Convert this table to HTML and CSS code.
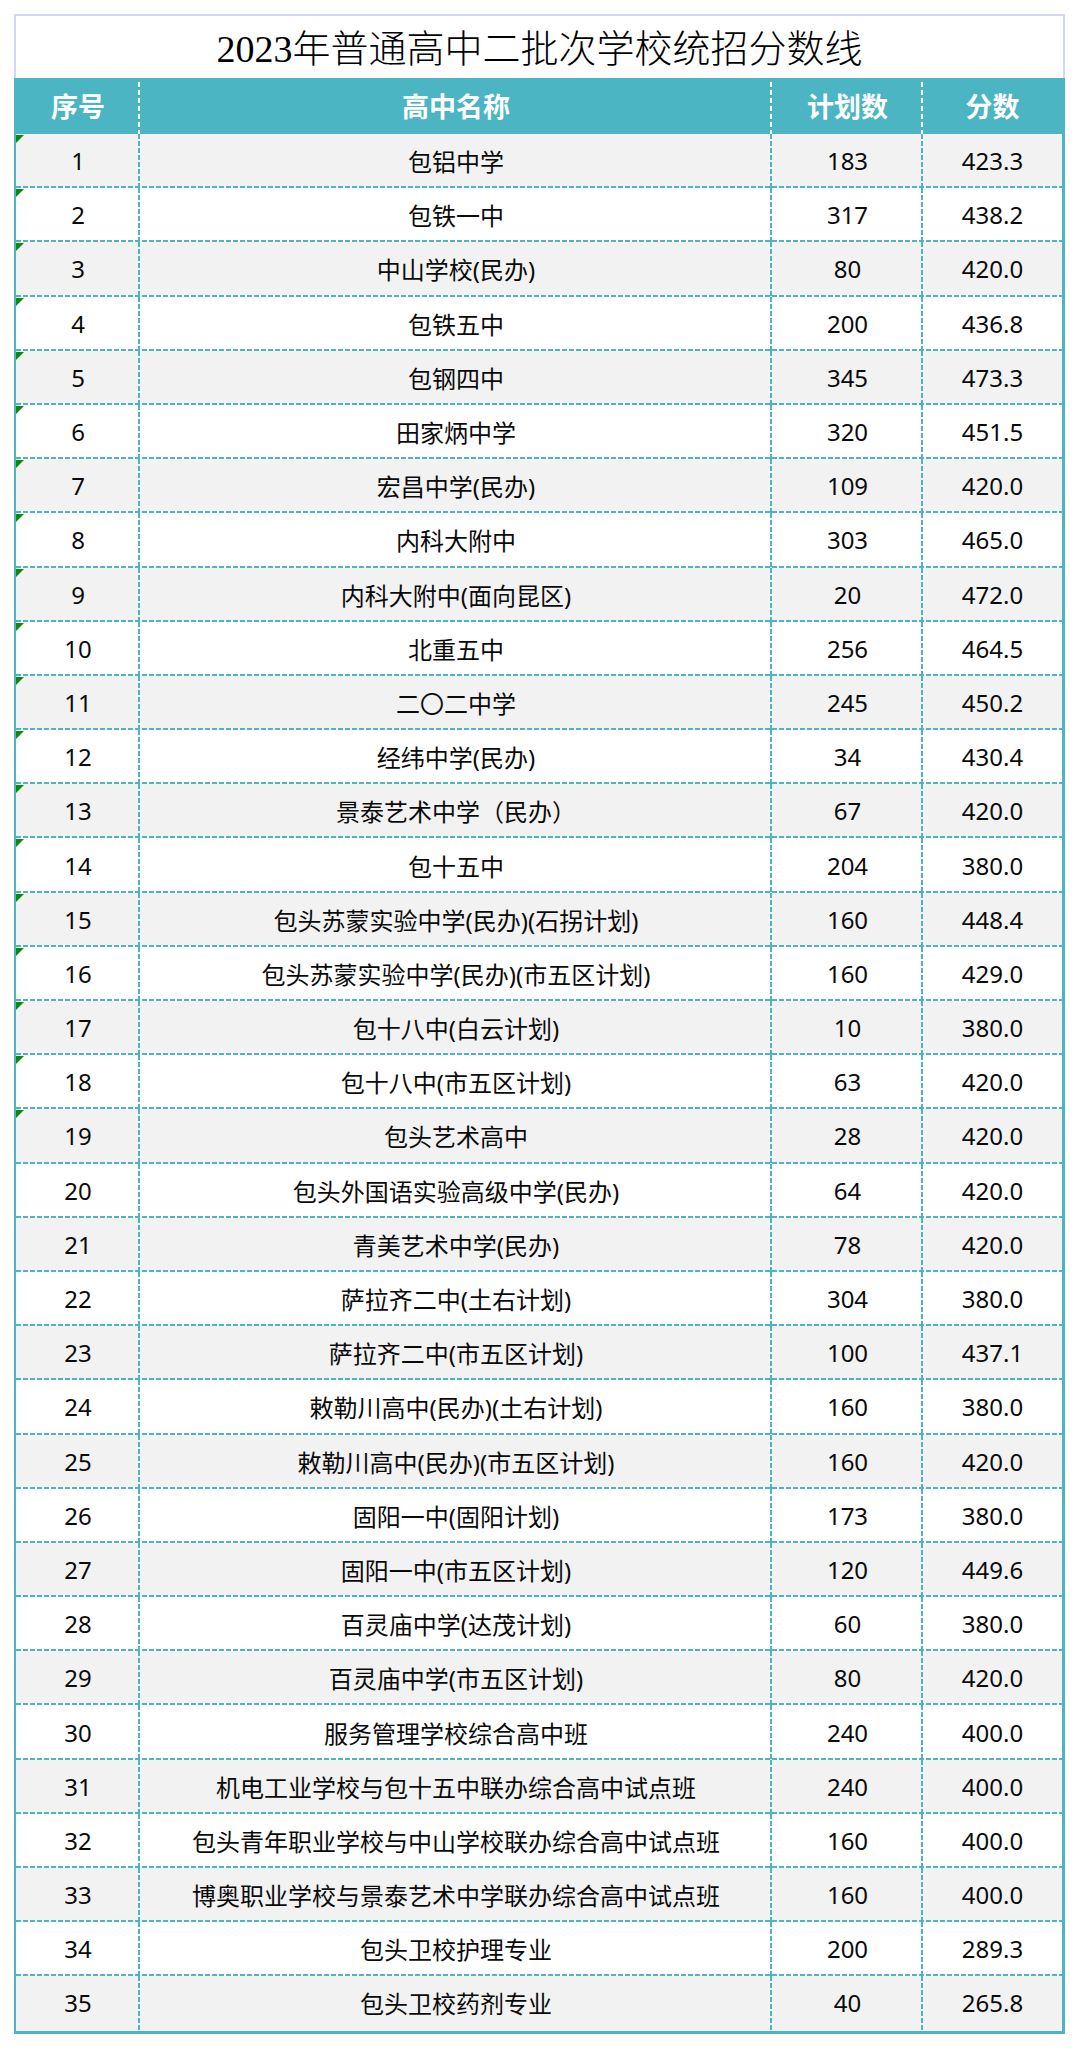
FILE: index.html
```html
<!DOCTYPE html>
<html lang="zh-CN">
<head>
<meta charset="utf-8">
<title>2023年普通高中二批次学校统招分数线</title>
<link rel="stylesheet" href="styles.css">
</head>
<body>
<div class="sheet">
  <div class="title">2023年普通高中二批次学校统招分数线</div>
  <div class="grid">
    <div class="row head"><div class="cell">序号</div><div class="cell">高中名称</div><div class="cell">计划数</div><div class="cell">分数</div></div>
    <div class="row odd mark"><div class="cell">1</div><div class="cell">包铝中学</div><div class="cell">183</div><div class="cell">423.3</div></div>
    <div class="row mark"><div class="cell">2</div><div class="cell">包铁一中</div><div class="cell">317</div><div class="cell">438.2</div></div>
    <div class="row odd mark"><div class="cell">3</div><div class="cell">中山学校(民办)</div><div class="cell">80</div><div class="cell">420.0</div></div>
    <div class="row mark"><div class="cell">4</div><div class="cell">包铁五中</div><div class="cell">200</div><div class="cell">436.8</div></div>
    <div class="row odd mark"><div class="cell">5</div><div class="cell">包钢四中</div><div class="cell">345</div><div class="cell">473.3</div></div>
    <div class="row mark"><div class="cell">6</div><div class="cell">田家炳中学</div><div class="cell">320</div><div class="cell">451.5</div></div>
    <div class="row odd mark"><div class="cell">7</div><div class="cell">宏昌中学(民办)</div><div class="cell">109</div><div class="cell">420.0</div></div>
    <div class="row mark"><div class="cell">8</div><div class="cell">内科大附中</div><div class="cell">303</div><div class="cell">465.0</div></div>
    <div class="row odd mark"><div class="cell">9</div><div class="cell">内科大附中(面向昆区)</div><div class="cell">20</div><div class="cell">472.0</div></div>
    <div class="row mark"><div class="cell">10</div><div class="cell">北重五中</div><div class="cell">256</div><div class="cell">464.5</div></div>
    <div class="row odd mark"><div class="cell">11</div><div class="cell">二〇二中学</div><div class="cell">245</div><div class="cell">450.2</div></div>
    <div class="row mark"><div class="cell">12</div><div class="cell">经纬中学(民办)</div><div class="cell">34</div><div class="cell">430.4</div></div>
    <div class="row odd mark"><div class="cell">13</div><div class="cell">景泰艺术中学（民办）</div><div class="cell">67</div><div class="cell">420.0</div></div>
    <div class="row mark"><div class="cell">14</div><div class="cell">包十五中</div><div class="cell">204</div><div class="cell">380.0</div></div>
    <div class="row odd mark"><div class="cell">15</div><div class="cell">包头苏蒙实验中学(民办)(石拐计划)</div><div class="cell">160</div><div class="cell">448.4</div></div>
    <div class="row mark"><div class="cell">16</div><div class="cell">包头苏蒙实验中学(民办)(市五区计划)</div><div class="cell">160</div><div class="cell">429.0</div></div>
    <div class="row odd mark"><div class="cell">17</div><div class="cell">包十八中(白云计划)</div><div class="cell">10</div><div class="cell">380.0</div></div>
    <div class="row mark"><div class="cell">18</div><div class="cell">包十八中(市五区计划)</div><div class="cell">63</div><div class="cell">420.0</div></div>
    <div class="row odd mark"><div class="cell">19</div><div class="cell">包头艺术高中</div><div class="cell">28</div><div class="cell">420.0</div></div>
    <div class="row"><div class="cell">20</div><div class="cell">包头外国语实验高级中学(民办)</div><div class="cell">64</div><div class="cell">420.0</div></div>
    <div class="row odd"><div class="cell">21</div><div class="cell">青美艺术中学(民办)</div><div class="cell">78</div><div class="cell">420.0</div></div>
    <div class="row"><div class="cell">22</div><div class="cell">萨拉齐二中(土右计划)</div><div class="cell">304</div><div class="cell">380.0</div></div>
    <div class="row odd"><div class="cell">23</div><div class="cell">萨拉齐二中(市五区计划)</div><div class="cell">100</div><div class="cell">437.1</div></div>
    <div class="row"><div class="cell">24</div><div class="cell">敕勒川高中(民办)(土右计划)</div><div class="cell">160</div><div class="cell">380.0</div></div>
    <div class="row odd"><div class="cell">25</div><div class="cell">敕勒川高中(民办)(市五区计划)</div><div class="cell">160</div><div class="cell">420.0</div></div>
    <div class="row"><div class="cell">26</div><div class="cell">固阳一中(固阳计划)</div><div class="cell">173</div><div class="cell">380.0</div></div>
    <div class="row odd"><div class="cell">27</div><div class="cell">固阳一中(市五区计划)</div><div class="cell">120</div><div class="cell">449.6</div></div>
    <div class="row"><div class="cell">28</div><div class="cell">百灵庙中学(达茂计划)</div><div class="cell">60</div><div class="cell">380.0</div></div>
    <div class="row odd"><div class="cell">29</div><div class="cell">百灵庙中学(市五区计划)</div><div class="cell">80</div><div class="cell">420.0</div></div>
    <div class="row"><div class="cell">30</div><div class="cell">服务管理学校综合高中班</div><div class="cell">240</div><div class="cell">400.0</div></div>
    <div class="row odd"><div class="cell">31</div><div class="cell">机电工业学校与包十五中联办综合高中试点班</div><div class="cell">240</div><div class="cell">400.0</div></div>
    <div class="row"><div class="cell">32</div><div class="cell">包头青年职业学校与中山学校联办综合高中试点班</div><div class="cell">160</div><div class="cell">400.0</div></div>
    <div class="row odd"><div class="cell">33</div><div class="cell">博奥职业学校与景泰艺术中学联办综合高中试点班</div><div class="cell">160</div><div class="cell">400.0</div></div>
    <div class="row"><div class="cell">34</div><div class="cell">包头卫校护理专业</div><div class="cell">200</div><div class="cell">289.3</div></div>
    <div class="row odd last"><div class="cell">35</div><div class="cell">包头卫校药剂专业</div><div class="cell">40</div><div class="cell">265.8</div></div>
  </div>
</div>
</body>
</html>
```

FILE: styles.css
```css
html, body {
  margin: 0;
  padding: 0;
  background: #ffffff;
}

.sheet {
  margin: 14px 0 0 14px;
  width: 1051px;
}

.title {
  box-sizing: border-box;
  height: 64px;
  border: 2px solid #d3d9ea;
  border-bottom: none;
  padding-top: 4px;
  line-height: 58px;
  text-align: center;
  font-family: "Liberation Serif", "Noto Sans CJK SC", serif;
  font-size: 38px;
  font-weight: 300;
  color: #000;
  white-space: nowrap;
}

.grid {
  border-left: 2px solid #4bb5c3;
  border-right: 3px solid #4bb5c3;
  border-bottom: 3px solid #4bb5c3;
  font-family: "Noto Sans", "Noto Sans CJK SC", sans-serif;
  font-size: 24px;
  color: #0a0a0a;
}

.row {
  display: grid;
  grid-template-columns: 124px 632px 151px 139px;
  height: 54.2px;
  background-color: #ffffff;
  background-image: repeating-linear-gradient(to right, #4bb5c3 0 5px, transparent 5px 7px);
  background-size: 100% 2px;
  background-position: left bottom;
  background-repeat: no-repeat;
}

.row.odd {
  background-color: #f2f2f2;
}

.row.last {
  background-image: none;
}

.row.head {
  height: 56px;
  background-color: #4bb5c3;
  background-image: none;
  color: #ffffff;
  font-family: "Noto Sans CJK SC", sans-serif;
  font-weight: 700;
  font-size: 27px;
}

.cell {
  position: relative;
  display: flex;
  align-items: center;
  justify-content: center;
  white-space: nowrap;
  padding-bottom: 1px;
  background-image: repeating-linear-gradient(to bottom, #4bb5c3 0 5px, transparent 5px 7px);
  background-size: 2px 100%;
  background-position: right top;
  background-repeat: no-repeat;
}

.cell:last-child {
  background-image: none;
}

.head .cell {
  background-image: repeating-linear-gradient(to bottom, #ffffff 0 5px, transparent 5px 8px);
  background-size: 2px calc(100% - 4px);
  background-position: right bottom;
}

.head .cell:last-child {
  background-image: none;
}

.mark .cell:first-child::before {
  content: "";
  position: absolute;
  left: 0;
  top: 1px;
  width: 0;
  height: 0;
  border-top: 8px solid #0b8a0b;
  border-right: 8px solid transparent;
}
```
